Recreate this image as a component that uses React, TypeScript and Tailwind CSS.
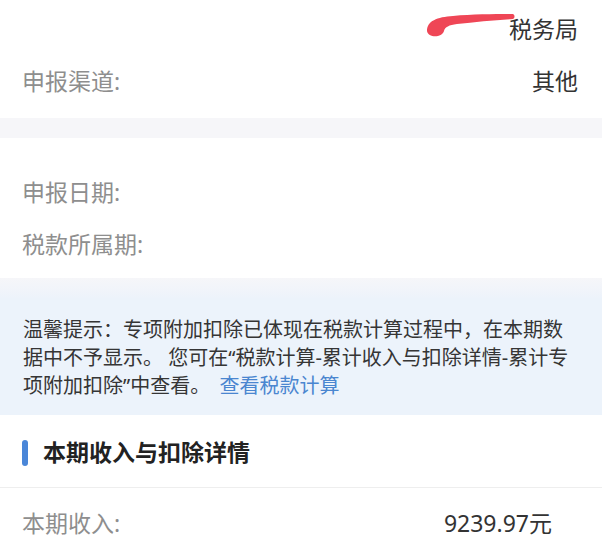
const font = { fontFamily: '"Noto Sans", "Noto Sans CJK SC", sans-serif' };

function Row({ label, value, className = '' }: { label: string; value?: string; className?: string }) {
  return (
    <div className={`flex h-[52px] items-center justify-between pl-[22px] pr-6 ${className}`}>
      <span className="text-[23px] text-[#8e8e8e]">{label}</span>
      {value && <span className="text-[23px] text-[#333333]">{value}</span>}
    </div>
  );
}

function Scribble() {
  return (
    <svg
      className="absolute left-[425px] top-[13px]"
      width="90"
      height="26"
      viewBox="0 0 90 26"
    >
      <path
        d="M2 18 C2 8 12 4 28 3 C48 1 70 1 88 1 C90 2 90 5 88 6 C70 7 50 9 32 11 C24 12 20 14 19 18 C17 25 3 25 2 18 Z"
        fill="#ef4656"
      />
    </svg>
  );
}

export default function App() {
  return (
    <div className="w-[602px] h-[539px] overflow-hidden bg-white" style={font}>
      <div className="relative bg-white pt-[3px] pb-[11px]">
        <Scribble />
        <Row label="" value="税务局" />
        <Row label="申报渠道:" value="其他" />
      </div>

      <div className="h-5 bg-[#f6f6f9]" />

      <div className="bg-white pt-[28px] pb-[8px]">
        <Row label="申报日期:" />
        <Row label="税款所属期:" />
      </div>

      <div className="h-5 bg-gradient-to-b from-[#f6f6f9] to-[#edf3fb]" />

      <div className="bg-[#ecf3fb] pl-[23px] pr-4 pt-[18px] pb-[15px] text-[20px] leading-[28px] text-[#353535]">
        温馨提示：专项附加扣除已体现在税款计算过程中，在本期数
        <br />
        据中不予显示。 您可在“税款计算-累计收入与扣除详情-累计专
        <br />
        项附加扣除”中查看。 <span className="ml-1 text-[#4a86d0]">查看税款计算</span>
      </div>

      <div className="flex h-[72px] items-center pl-[22px] pt-[3px]">
        <span className="h-[26px] w-[6px] rounded-full bg-[#4a86d8]" />
        <span className="ml-[15px] text-[23px] font-bold text-[#222222]">本期收入与扣除详情</span>
      </div>

      <div className="h-px bg-[#eeeeee]" />

      <div className="flex h-[70px] items-center justify-between pl-[22px] pr-[50px]">
        <span className="text-[23px] leading-none text-[#8e8e8e]">本期收入:</span>
        <span className="text-[23px] leading-none text-[#333333]">9239.97元</span>
      </div>
    </div>
  );
}
